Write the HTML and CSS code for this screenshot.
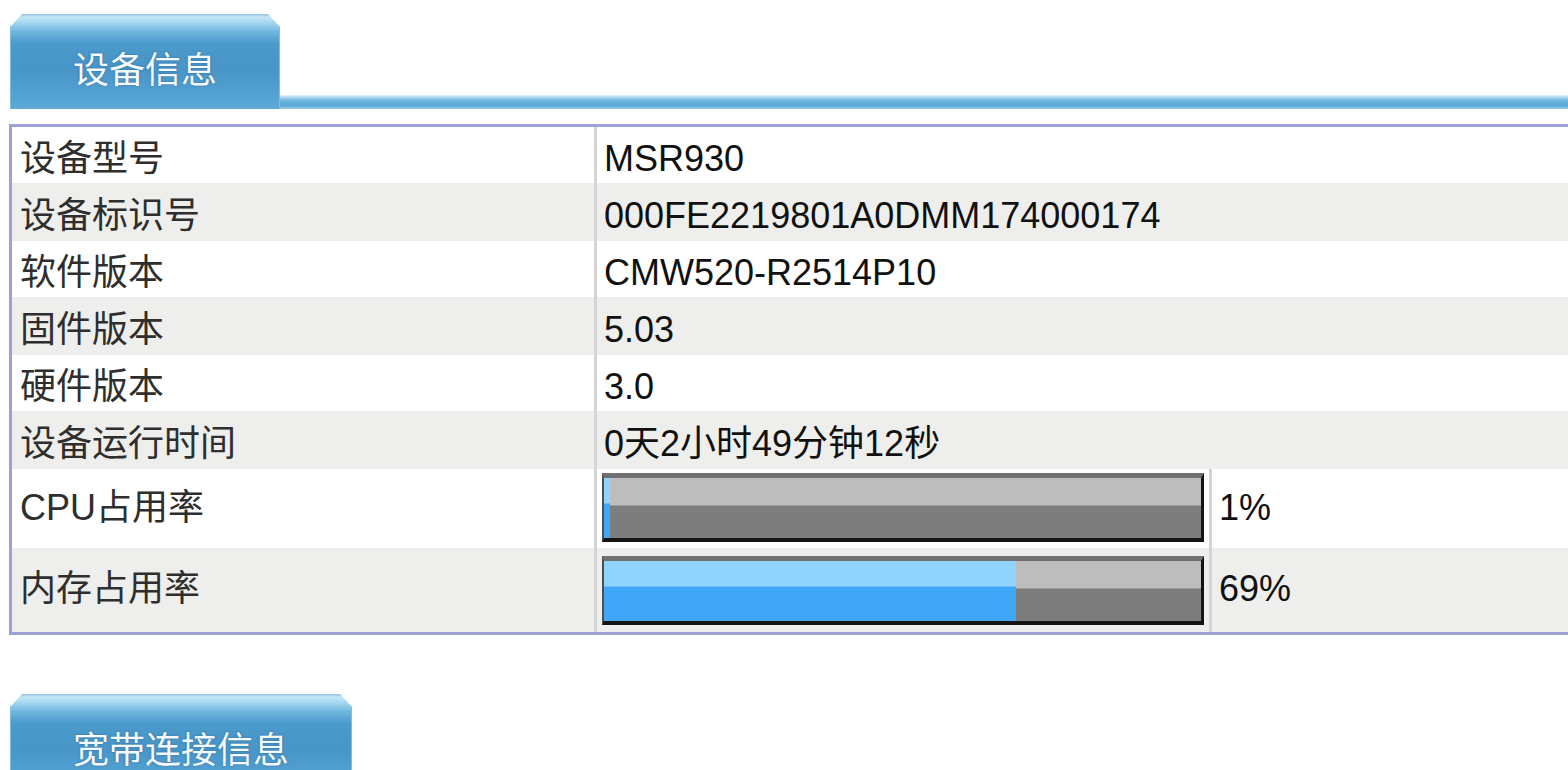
FILE: index.html
```html
<!DOCTYPE html>
<html lang="zh-CN">
<head>
<meta charset="utf-8">
<title>设备信息</title>
<link rel="stylesheet" href="styles.css">
</head>
<body>
<div class="page">
  <div class="tabbar">
    <div class="tab">设备信息</div>
    <div class="tabline"></div>
  </div>
  <table class="info">
    <colgroup>
      <col class="c-label">
      <col class="c-value">
      <col class="c-pct">
    </colgroup>
    <tbody>
      <tr class="odd"><td class="label">设备型号</td><td class="value" colspan="2">MSR930</td></tr>
      <tr class="even"><td class="label">设备标识号</td><td class="value" colspan="2">000FE2219801A0DMM174000174</td></tr>
      <tr class="odd"><td class="label">软件版本</td><td class="value" colspan="2">CMW520-R2514P10</td></tr>
      <tr class="even"><td class="label">固件版本</td><td class="value" colspan="2">5.03</td></tr>
      <tr class="odd"><td class="label">硬件版本</td><td class="value" colspan="2">3.0</td></tr>
      <tr class="even"><td class="label">设备运行时间</td><td class="value" colspan="2">0天2小时49分钟12秒</td></tr>
      <tr class="odd bar-row cpu"><td class="label">CPU占用率</td><td class="value barcell"><div class="bar"><div class="fill" style="width:1%"></div></div></td><td class="value pct">1%</td></tr>
      <tr class="even bar-row mem"><td class="label">内存占用率</td><td class="value barcell"><div class="bar"><div class="fill" style="width:69%"></div></div></td><td class="value pct">69%</td></tr>
    </tbody>
  </table>
  <div class="tabbar second">
    <div class="tab">宽带连接信息</div>
  </div>
</div>
</body>
</html>
```

FILE: styles.css
```css
html, body {
  margin: 0;
  padding: 0;
  background: #ffffff;
  overflow: hidden;
}

body {
  font-family: "Liberation Sans", "Noto Sans CJK SC", sans-serif;
  font-size: 36px;
  color: #111;
}

.page {
  padding: 14px 0 0 9px;
  width: 1620px;
}

.tabbar {
  display: flex;
  align-items: flex-end;
  height: 95px;
}

.tabbar.second {
  margin-top: 59px;
}

.tab {
  margin-left: 1px;
  height: 95px;
  padding: 0 63px;
  box-sizing: border-box;
  display: flex;
  align-items: center;
  padding-top: 10px;
  color: #f4faff;
  font-family: "Noto Sans CJK SC", sans-serif;
  font-size: 36px;
  line-height: 40px;
  text-shadow: 0 0 2px rgba(40, 90, 140, 0.8);
  background: linear-gradient(#8cbfdc 0px, #c4e6f7 3px, #a9d9f1 8px, #6db5dd 18px, #4a9acb 30px, #4895c7 55px, #55a4d4 85px, #5eaad7 95px);
  clip-path: polygon(12px 0, calc(100% - 12px) 0, 100% 13px, 100% 100%, 0 100%, 0 13px);
  box-shadow: inset 1px 0 0 #7fbde2, inset -1px 0 0 #7fbde2;
}

.tabline {
  flex: 1;
  height: 14px;
  background: linear-gradient(#e2f2fb 0px, #9fd0ec 3px, #66b2dc 6px, #5aa8d6 11px, #a6d3ec 14px);
}

.info {
  margin-top: 15px;
  border: 3px solid #9ca2d6;
  border-collapse: separate;
  border-spacing: 0;
  table-layout: fixed;
  width: 1620px;
}

.c-label { width: 582px; }
.c-value { width: 615px; }

.info td {
  padding: 8px 8px 0 8px;
  line-height: 40px;
  vertical-align: middle;
  white-space: nowrap;
}

.info tr.odd { height: 56px; background: #ffffff; }
.info tr.even { height: 58px; background: #eeefed; }

.info td.label {
  color: #2e2e2e;
  padding-left: 8px;
}

.info td.value {
  border-left: 3px solid #d5d5d5;
  padding-left: 7px;
  color: #111;
}

.info tr.bar-row.cpu { height: 79px; }
.info tr.bar-row.mem { height: 84px; }

.info tr.bar-row td.label {
  padding-top: 0;
  padding-bottom: 2px;
}

.info td.barcell {
  padding: 0 5px 0 5px;
}

.info tr.cpu td.barcell { padding-bottom: 2px; }

.info td.pct {
  padding-left: 7px;
  padding-top: 0;
  padding-bottom: 2px;
}

.bar {
  height: 60px;
  border-style: solid;
  border-width: 5px 3px 4px 2px;
  border-color: #707070 #141414 #141414 #4e4e4e;
  background: linear-gradient(#bdbdbd 0 27px, #9a9a9a 27px 28px, #7d7d7d 28px 100%);
  display: flex;
}

.fill {
  height: 100%;
  background: linear-gradient(#8fd3fe 0 25px, #6bbcf8 25px 26px, #3fa7f5 26px 100%);
}
```
